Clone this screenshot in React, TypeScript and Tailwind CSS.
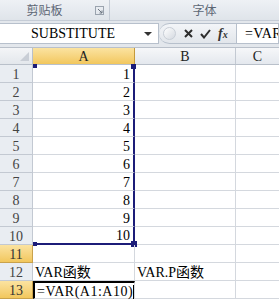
import React from "react";

const cellFont = "[font-family:Liberation_Serif,Noto_Sans_CJK_SC,serif]";

const rows = Array.from({ length: 13 }, (_, i) => i + 1);

function Corner() {
  return (
    <div className="relative w-[33px] shrink-0 h-full border-r border-[#b9c0ca] bg-gradient-to-b from-[#f4f5f7] to-[#e3e7ec]">
      <div className="absolute right-[3px] bottom-[3px] w-0 h-0 border-l-[9px] border-l-transparent border-b-[9px] border-b-[#c9ced6]" />
    </div>
  );
}

export default function App() {
  return (
    <div className="w-[279px] h-[303px] overflow-hidden bg-white select-none">
      {/* ribbon group labels */}
      <div className="flex h-[21px] bg-gradient-to-b from-[#eef1f5] to-[#dfe4ea] border-b border-[#c5ccd6] text-[12px] text-[#5c6674] [font-family:Noto_Sans_CJK_SC,sans-serif]">
        <div className="relative w-[110px] shrink-0 flex items-center justify-center border-r border-[#c5ccd6]">
          <span className="pr-[20px] leading-none">剪贴板</span>
          <svg className="absolute right-[5px] top-[6px]" width="9" height="9" viewBox="0 0 9 9">
            <rect x="0.5" y="0.5" width="8" height="8" fill="none" stroke="#9aa3ae" />
            <path d="M3 3 L7 7 M7 4.5 V7 H4.5" stroke="#6d7682" fill="none" />
          </svg>
        </div>
        <div className="flex-1 flex items-center justify-center pl-[20px]">
          <span className="leading-none">字体</span>
        </div>
      </div>

      {/* formula bar */}
      <div className="h-[26px] pt-[2px] pb-[3px] bg-[#e3e7ec] flex">
        <div className="w-[159px] shrink-0 flex bg-white border-y border-r border-[#b7c0cc]">
          <div className={`flex-1 flex items-center justify-center pl-[8px] text-[14px] text-black ${cellFont}`}>
            SUBSTITUTE
          </div>
          <div className="w-[20px] flex items-center justify-center">
            <div className="w-0 h-0 border-x-[4px] border-x-transparent border-t-[4px] border-t-[#333]" />
          </div>
        </div>
        <div className="w-[77px] shrink-0 flex items-center pl-[4px] border-y border-[#b7c0cc] bg-gradient-to-b from-[#f3f5f8] to-[#e2e6eb] rounded-l-full">
          <div className="w-[13px] h-[13px] rounded-full bg-gradient-to-br from-[#ffffff] to-[#d4d9e0] border border-[#c8ced6]" />
          <svg className="ml-[8px]" width="9" height="9" viewBox="0 0 9 9">
            <path d="M1 1 L8 8 M8 1 L1 8" stroke="#2d2d2d" strokeWidth="2" />
          </svg>
          <svg className="ml-[7px]" width="11" height="10" viewBox="0 0 11 10">
            <path d="M1 5 L4 8.5 L10 1" stroke="#2d2d2d" strokeWidth="2" fill="none" />
          </svg>
          <span className="ml-[7px] text-[14px] italic font-bold text-[#333] [font-family:Liberation_Serif,serif] leading-none">
            f<span className="text-[10px]">x</span>
          </span>
        </div>
        <div className={`flex-1 min-w-0 overflow-hidden whitespace-nowrap flex items-center pl-[8px] bg-white border border-[#b7c0cc] text-[14px] tracking-[0.3px] text-black ${cellFont}`}>
          =VAR(A1:A10)
        </div>
      </div>

      {/* column headers */}
      <div className={`flex h-[18px] border-y border-[#b9c0ca] text-[14px] text-[#222] ${cellFont}`}>
        <Corner />
        <div className="w-[102px] shrink-0 flex items-center justify-center border-r border-[#c49a3c] bg-gradient-to-b from-[#fbe3a0] to-[#f2c75c]">
          A
        </div>
        <div className="w-[101px] shrink-0 flex items-center justify-center border-r border-[#c3c9d2] bg-gradient-to-b from-[#f6f7f9] to-[#e4e8ee]">
          B
        </div>
        <div className="flex-1 flex items-center justify-center bg-gradient-to-b from-[#f6f7f9] to-[#e4e8ee]">
          C
        </div>
      </div>

      {/* grid rows */}
      {rows.map((r) => {
        const hl = r === 11 || r === 13;
        const inRange = r <= 10;
        return (
          <div key={r} className={`flex h-[18px] text-[14px] ${cellFont}`}>
            <div
              className={`w-[33px] shrink-0 flex items-center justify-center pt-[1px] border-r border-b ${
                hl
                  ? "bg-gradient-to-b from-[#fbe3a0] to-[#f2c75c] border-[#c9a24c] text-[#333]"
                  : "bg-[#e9edf2] border-[#c3c9d2] text-[#444]"
              }`}
            >
              {r}
            </div>
            <div
              className={`relative w-[102px] shrink-0 flex items-center pt-[1px] px-[2px] border-b ${
                inRange ? "justify-end pr-[3px] border-r-2 border-r-[#1c1c78]" : "border-r border-r-[#d4d8de]"
              } ${r === 10 ? "border-b-2 border-b-[#1c1c78]" : "border-b-[#d4d8de]"} ${
                r === 13 ? "border-2 border-black z-10 bg-white" : ""
              }`}
            >
              {inRange && <span className="text-black">{r}</span>}
              {r === 12 && <span className="text-black whitespace-nowrap">VAR函数</span>}
              {r === 13 && (
                <span className="text-black whitespace-nowrap tracking-[0.5px]">
                  =VAR(A1:A10)
                  <span className="inline-block w-px h-[14px] bg-black align-middle" />
                </span>
              )}
              {r === 1 && (
                <>
                  <div className="absolute left-0 top-[-1px] w-[4px] h-[4px] bg-[#1c1c78]" />
                  <div className="absolute right-[-3px] top-[-1px] w-[5px] h-[5px] bg-[#1c1c78]" />
                </>
              )}
              {r === 10 && (
                <>
                  <div className="absolute left-0 bottom-[-3px] w-[4px] h-[4px] bg-[#1c1c78]" />
                  <div className="absolute right-[-4px] bottom-[-4px] w-[6px] h-[6px] bg-[#1c1c78]" />
                </>
              )}
            </div>
            <div className="w-[101px] shrink-0 flex items-center pt-[1px] px-[2px] border-r border-b border-[#d4d8de]">
              {r === 12 && <span className="text-black whitespace-nowrap">VAR.P函数</span>}
            </div>
            <div className="flex-1 border-b border-[#d4d8de]" />
          </div>
        );
      })}
    </div>
  );
}
